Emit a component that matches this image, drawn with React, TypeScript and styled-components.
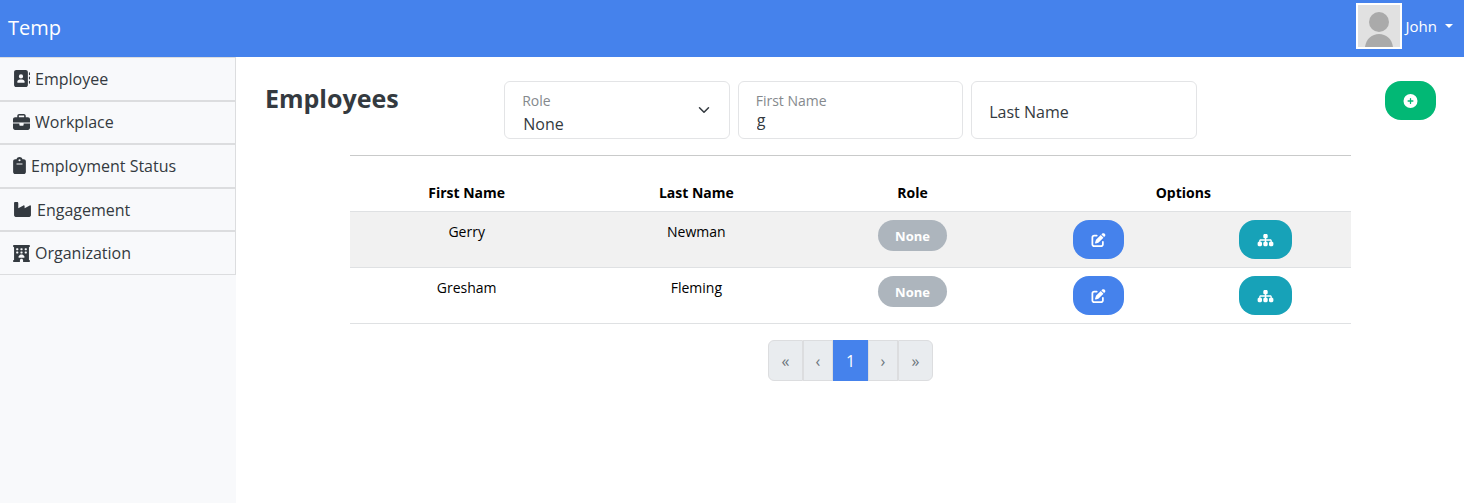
import React, { useState } from "react";
import styled, { createGlobalStyle } from "styled-components";
import {
  FaAddressBook,
  FaBriefcase,
  FaClipboard,
  FaIndustry,
  FaHotel,
  FaCirclePlus,
  FaPenToSquare,
  FaSitemap,
} from "react-icons/fa6";

const GlobalStyle = createGlobalStyle`
  *, *::before, *::after { box-sizing: border-box; }
  body {
    margin: 0;
    background: #fff;
    color: #343a40;
    font-family: "Open Sans", "Noto Sans", sans-serif;
    font-size: 16px;
    line-height: 24px;
  }
  button, input, select { font: inherit; }
`;

const Page = styled.div`
  min-height: 100vh;
  display: flex;
  flex-direction: column;
`;

const TopBar = styled.header`
  display: flex;
  justify-content: space-between;
  align-items: center;
  height: 57px;
  padding: 0 11px 0 8px;
  background: #4582ec;
`;

const Brand = styled.a`
  margin-bottom: 2px;
  color: #fff;
  font-size: 20px;
  line-height: 32px;
  text-decoration: none;
`;

const UserMenu = styled.button`
  display: flex;
  align-items: center;
  gap: 4px;
  margin-bottom: 5px;
  padding: 0;
  border: 0;
  background: none;
  color: #fff;
  font-size: 15px;
  line-height: 20px;
  cursor: pointer;
`;

const Avatar = styled.svg`
  width: 46px;
  height: 46px;
  border: 2px solid #fff;
  background: #e1e1e1;
`;

const Caret = styled.span`
  margin-left: 4px;
  border: 4px solid transparent;
  border-top-color: #fff;
  border-bottom: 0;
`;

const Body = styled.div`
  flex: 1;
  display: flex;
`;

const Sidebar = styled.nav`
  flex: 0 0 236px;
  background: #f8f9fb;
`;

const NavList = styled.ul`
  display: grid;
  grid-auto-rows: 1fr;
  height: 218px;
  margin: 0;
  padding: 0;
  list-style: none;
`;

const NavLink = styled.a<{ $iconWidth: number }>`
  display: flex;
  align-items: center;
  gap: 5px;
  height: 100%;
  padding: 0 12px 0 13px;
  border: solid #dcdddf;
  border-width: 1px 1px 1px 0;
  color: #343a40;
  text-decoration: none;

  svg {
    flex: none;
    width: ${(p) => p.$iconWidth}px;
    height: 17px;
  }
`;

const Main = styled.main`
  flex: 1;
  min-width: 0;
  padding: 24px 13px 24px 14px;
`;

const Toolbar = styled.div`
  display: grid;
  grid-template-columns: 5fr 14fr 5fr;
  align-items: start;
`;

const Title = styled.h1`
  margin: 0;
  padding-left: 15px;
  font-size: 25px;
  line-height: 34px;
  font-weight: 700;
`;

const Filters = styled.form`
  display: grid;
  grid-template-columns: repeat(3, 1fr);
  gap: 8px;
  padding: 0 4px;
`;

const Field = styled.div`
  position: relative;
`;

const FieldLabel = styled.label<{ $raised: boolean }>`
  position: absolute;
  left: 18px;
  top: ${(p) => (p.$raised ? 8 : 19)}px;
  color: ${(p) => (p.$raised ? "#85898d" : "#343a40")};
  font-size: ${(p) => (p.$raised ? 14 : 16)}px;
  pointer-events: none;
`;

const TextInput = styled.input`
  width: 100%;
  height: 58px;
  padding: 24px 18px 4px;
  border: 1px solid #e3e4e6;
  border-radius: 6px;
  outline: 0;
  background: #fff;
  color: #343a40;
`;

const SelectInput = styled.select`
  width: 100%;
  height: 58px;
  padding: 28px 48px 0 18px;
  appearance: none;
  border: 1px solid #e3e4e6;
  border-radius: 6px;
  outline: 0;
  background: #fff;
  color: #343a40;
`;

const Chevron = styled.svg`
  position: absolute;
  right: 20px;
  top: 23px;
  width: 12px;
  height: 12px;
  pointer-events: none;
`;

const PillButton = styled.button<{ $color: string; $iconWidth?: number }>`
  display: inline-flex;
  align-items: center;
  justify-content: center;
  height: 39px;
  padding: 0 18px;
  border: 0;
  border-radius: 16px;
  background: ${(p) => p.$color};
  color: #fff;
  vertical-align: top;
  cursor: pointer;

  svg {
    flex: none;
    width: ${(p) => p.$iconWidth ?? 15}px;
    height: 14px;
  }
`;

const AddSlot = styled.div`
  display: flex;
  justify-content: flex-end;
  padding-right: 15px;
`;

const Results = styled.section`
  width: calc(100% * 10 / 12);
  margin: 16px auto 0;
  padding-top: 16px;
  border-top: 1px solid #c9caca;
`;

const Table = styled.table`
  width: 100%;
  table-layout: fixed;
  border-collapse: collapse;
  color: #000;
  font-size: 14px;
  text-align: center;

  th, td {
    padding: 8px;
    border-bottom: 1px solid #dfe1e3;
    vertical-align: top;
  }
  th { padding: 9px 8px 6px; }
  tbody tr:nth-child(odd) { background: #f1f1f1; }
`;

const Col = styled.col<{ $share: number }>`
  width: ${(p) => p.$share}%;
`;

const RoleBadge = styled.span`
  display: inline-block;
  height: 31px;
  padding: 0 17px;
  border-radius: 16px;
  background: #adb5bd;
  color: #fff;
  font-size: 13px;
  line-height: 32px;
  font-weight: 700;
  vertical-align: top;
`;

const Pagination = styled.nav`
  display: flex;
  justify-content: center;
  margin-top: 16px;
`;

const PageButton = styled.button<{ $active?: boolean; $narrow?: boolean }>`
  width: ${(p) => (p.$narrow ? 30 : 35)}px;
  height: 41px;
  padding: 0;
  border: 1px solid ${(p) => (p.$active ? "#4582ec" : "#dcdddf")};
  background: ${(p) => (p.$active ? "#4582ec" : "#e9ecef")};
  color: ${(p) => (p.$active ? "#fff" : "#6c757d")};

  & + & { border-left-width: ${(p) => (p.$active ? 1 : 0)}px; }
  &:first-child { border-radius: 6px 0 0 6px; }
  &:last-child { border-radius: 0 6px 6px 0; }
`;

const sections = [
  { name: "Employee", Icon: FaAddressBook, iconWidth: 17 },
  { name: "Workplace", Icon: FaBriefcase, iconWidth: 17 },
  { name: "Employment Status", Icon: FaClipboard, iconWidth: 13 },
  { name: "Engagement", Icon: FaIndustry, iconWidth: 19 },
  { name: "Organization", Icon: FaHotel, iconWidth: 17 },
];

const employees = [
  { first: "Gerry", last: "Newman", role: "None" },
  { first: "Gresham", last: "Fleming", role: "None" },
];

export default function App() {
  const [firstName, setFirstName] = useState("g");
  const [lastName, setLastName] = useState("");

  return (
    <Page>
      <GlobalStyle />
      <TopBar>
        <Brand href="#">Temp</Brand>
        <UserMenu type="button" aria-haspopup="menu">
          <Avatar viewBox="0 0 42 42" aria-hidden="true">
            <circle cx="21" cy="17" r="10" fill="#aaa" />
            <path d="M7 42c1-8 7-13 14-13s13 5 14 13z" fill="#aaa" />
          </Avatar>
          John
          <Caret />
        </UserMenu>
      </TopBar>
      <Body>
        <Sidebar aria-label="Sections">
          <NavList>
            {sections.map(({ name, Icon, iconWidth }) => (
              <li key={name}>
                <NavLink href="#" $iconWidth={iconWidth}>
                  <Icon aria-hidden="true" />
                  {name}
                </NavLink>
              </li>
            ))}
          </NavList>
        </Sidebar>
        <Main>
          <Toolbar>
            <Title>Employees</Title>
            <Filters onSubmit={(e) => e.preventDefault()}>
              <Field>
                <SelectInput id="role" defaultValue="None">
                  <option>None</option>
                </SelectInput>
                <FieldLabel htmlFor="role" $raised>Role</FieldLabel>
                <Chevron viewBox="0 0 16 16" aria-hidden="true">
                  <path d="m2 5 6 6 6-6" fill="none" stroke="#343a40" strokeWidth="2" strokeLinecap="round" strokeLinejoin="round" />
                </Chevron>
              </Field>
              <Field>
                <TextInput id="first-name" value={firstName} onChange={(e) => setFirstName(e.target.value)} />
                <FieldLabel htmlFor="first-name" $raised={firstName !== ""}>First Name</FieldLabel>
              </Field>
              <Field>
                <TextInput id="last-name" value={lastName} onChange={(e) => setLastName(e.target.value)} />
                <FieldLabel htmlFor="last-name" $raised={lastName !== ""}>Last Name</FieldLabel>
              </Field>
            </Filters>
            <AddSlot>
              <PillButton type="button" $color="#02b875" aria-label="Add employee">
                <FaCirclePlus />
              </PillButton>
            </AddSlot>
          </Toolbar>
          <Results>
            <Table>
              <colgroup>
                <Col $share={23.3} />
                <Col $share={22.6} />
                <Col $share={20.6} />
                <Col $share={16.5} />
                <Col $share={17} />
              </colgroup>
              <thead>
                <tr>
                  <th scope="col">First Name</th>
                  <th scope="col">Last Name</th>
                  <th scope="col">Role</th>
                  <th scope="colgroup" colSpan={2}>Options</th>
                </tr>
              </thead>
              <tbody>
                {employees.map(({ first, last, role }) => (
                  <tr key={first}>
                    <td>{first}</td>
                    <td>{last}</td>
                    <td><RoleBadge>{role}</RoleBadge></td>
                    <td>
                      <PillButton type="button" $color="#4582ec" aria-label={`Edit ${first} ${last}`}>
                        <FaPenToSquare />
                      </PillButton>
                    </td>
                    <td>
                      <PillButton type="button" $color="#17a2b8" $iconWidth={17} aria-label={`Organization of ${first} ${last}`}>
                        <FaSitemap />
                      </PillButton>
                    </td>
                  </tr>
                ))}
              </tbody>
            </Table>
            <Pagination aria-label="Pages">
              <PageButton type="button" aria-label="First page">«</PageButton>
              <PageButton type="button" aria-label="Previous page" $narrow>‹</PageButton>
              <PageButton type="button" aria-current="page" $active>1</PageButton>
              <PageButton type="button" aria-label="Next page" $narrow>›</PageButton>
              <PageButton type="button" aria-label="Last page">»</PageButton>
            </Pagination>
          </Results>
        </Main>
      </Body>
    </Page>
  );
}
